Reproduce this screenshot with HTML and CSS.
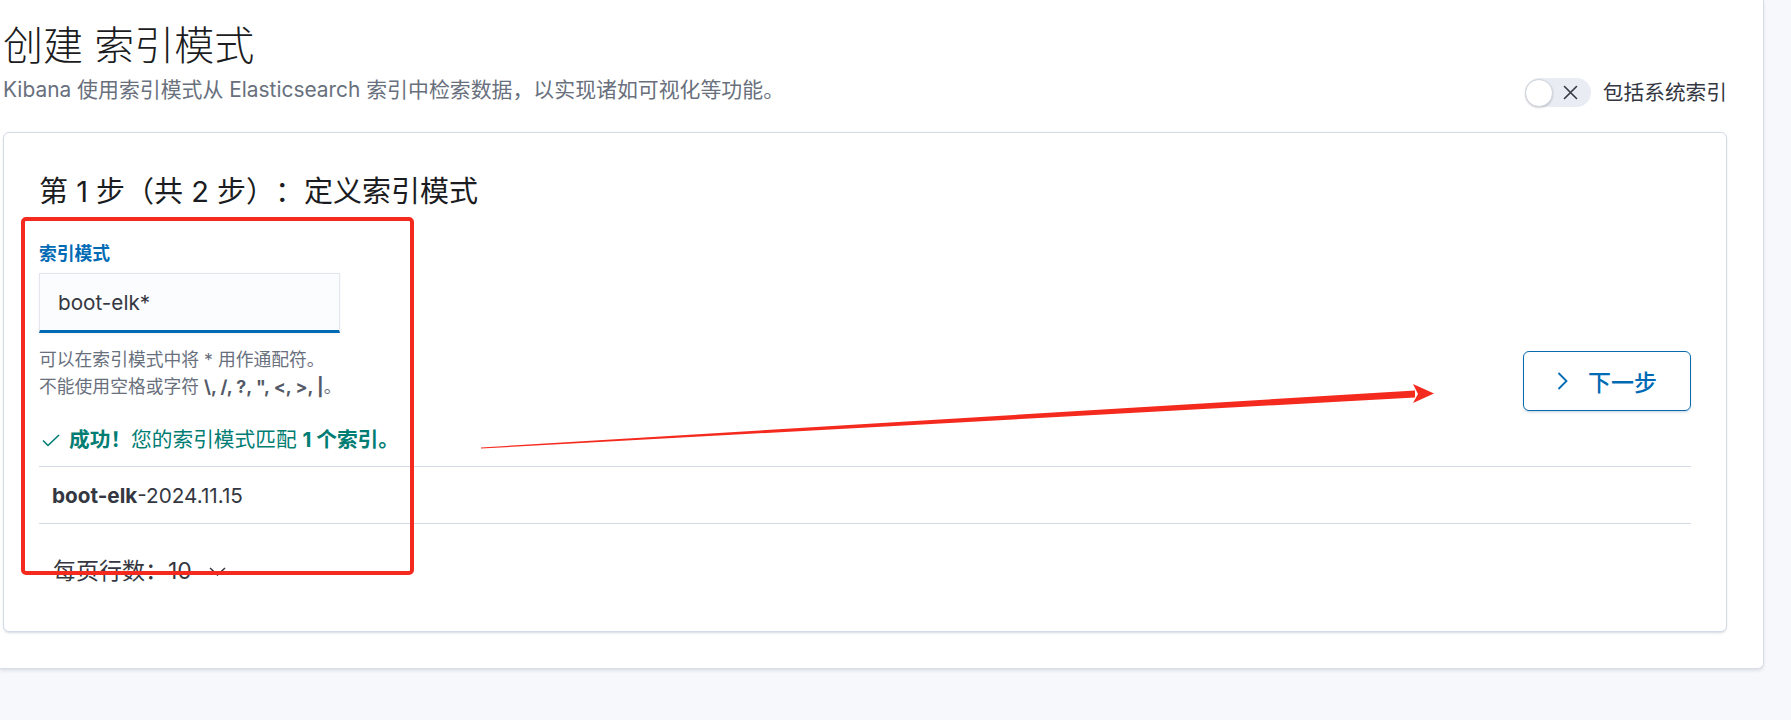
FILE: index.html
```html
<!DOCTYPE html>
<html lang="zh-CN">
<head>
<meta charset="utf-8">
<title>创建 索引模式</title>
<link rel="stylesheet" href="styles.css">
</head>
<body>
<div class="page">
  <div class="header">
    <div class="header-text">
      <h1 class="title">创建 索引模式</h1>
      <p class="subtitle">Kibana 使用索引模式从 Elasticsearch 索引中检索数据，以实现诸如可视化等功能。</p>
    </div>
    <div class="switch-wrap">
      <div class="switch">
        <span class="thumb"></span>
        <svg class="switch-x" width="15" height="15" viewBox="0 0 15 15"><path d="M1.5 1.5 L13.5 13.5 M13.5 1.5 L1.5 13.5" stroke="#343741" stroke-width="1.6" fill="none" stroke-linecap="round"/></svg>
      </div>
      <span class="switch-label">包括系统索引</span>
    </div>
  </div>

  <div class="card">
    <h2 class="step-title">第 1 步（共 2 步）：定义索引模式</h2>
    <div class="form-row">
      <div class="form-col">
        <div class="field-label">索引模式</div>
        <div class="input">boot-elk*</div>
        <div class="help">
          <div>可以在索引模式中将 * 用作通配符。</div>
          <div>不能使用空格或字符 <strong>\, /, ?, ", &lt;, &gt;, |</strong>。</div>
        </div>
        <div class="success">
          <svg class="check" width="18" height="13" viewBox="0 0 18 13"><polyline points="1,6.5 6,11.5 17,1" stroke="#017D73" stroke-width="1.6" fill="none"/></svg>
          <span><b>成功！</b>您的索引模式匹配 <b>1 个索引。</b></span>
        </div>
      </div>
      <button class="next-btn">
        <svg width="11" height="18" viewBox="0 0 11 18"><polyline points="1.5,1 9.5,9 1.5,17" stroke="#006BB4" stroke-width="1.8" fill="none"/></svg>
        <span>下一步</span>
      </button>
    </div>
    <div class="table-row"><b>boot-elk</b>-2024.11.15</div>
    <div class="pagination">
      <span>每页行数：10</span>
      <svg width="17" height="9" viewBox="0 0 17 9"><polyline points="1,1 8.5,8 16,1" stroke="#343741" stroke-width="1.5" fill="none"/></svg>
    </div>
  </div>
</div>

<div class="annot-box"></div>
<svg class="annot-arrow" width="1791" height="720" viewBox="0 0 1791 720">
  <polygon points="481,447.5 1415,390.5 1415,397.5 481,448.5" fill="#F52A1E"/>
  <polygon points="1413,384 1434,393.5 1413,403 1418,394" fill="#F52A1E"/>
</svg>
</body>
</html>
```

FILE: styles.css
```css
html, body {
  margin: 0;
  padding: 0;
}

body {
  width: 1791px;
  height: 720px;
  overflow: hidden;
  position: relative;
  background: #F7F8FC;
  font-family: Inter, "Noto Sans CJK SC", "Noto Sans", sans-serif;
  color: #343741;
  text-spacing-trim: space-all;
}

.page {
  width: 1764px;
  box-sizing: border-box;
  background: #FFFFFF;
  padding: 22px 36px 36px 3px;
  border-right: 1px solid #D8DEE8;
  border-bottom: 1px solid #D8DEE8;
  border-bottom-right-radius: 6px;
  box-shadow: 0 2px 3px rgba(152, 162, 179, 0.25);
}

.header {
  display: flex;
  justify-content: space-between;
  align-items: flex-end;
}

.title {
  margin: 0;
  font-size: 40px;
  line-height: 48px;
  font-weight: 300;
  color: #1A1C21;
}

.subtitle {
  margin: 6px 0 0;
  font-size: 20.9px;
  line-height: 28px;
  color: #69707D;
}

.switch-wrap {
  display: flex;
  align-items: center;
  gap: 12px;
  margin-bottom: -3px;
}

.switch {
  width: 66px;
  height: 29px;
  border-radius: 15px;
  background: #E9EDF3;
  display: flex;
  align-items: center;
}

.thumb {
  width: 28px;
  height: 28px;
  box-sizing: border-box;
  border-radius: 50%;
  background: #FFFFFF;
  border: 1px solid #CFD5DE;
  box-shadow: 0 1px 2px rgba(0, 0, 0, 0.18);
}

.switch-x {
  margin-left: 10px;
}

.switch-label {
  font-size: 20.7px;
  line-height: 29px;
  color: #343741;
}

.card {
  margin-top: 28px;
  background: #FFFFFF;
  border: 1px solid #D3DAE6;
  border-radius: 6px;
  padding: 35px;
  box-shadow: 0 2px 2px -1px rgba(152, 162, 179, 0.3), 0 1px 5px -2px rgba(152, 162, 179, 0.3);
}

.step-title {
  margin: 6px 0 0;
  font-size: 29px;
  line-height: 36px;
  font-weight: 400;
  color: #1A1C21;
}

.form-row {
  display: flex;
  justify-content: space-between;
  align-items: flex-start;
  margin-top: 32px;
}

.field-label {
  font-size: 17.8px;
  line-height: 24px;
  font-weight: 700;
  color: #006BB4;
}

.input {
  margin-top: 7px;
  width: 301px;
  height: 60px;
  box-sizing: border-box;
  border: 1px solid #E3E7ED;
  border-bottom: 3px solid #006BB4;
  background: #FBFCFD;
  padding: 0 18px;
  display: flex;
  align-items: center;
  font-size: 20.7px;
  color: #343741;
  box-shadow: 0 1px 3px rgba(0, 0, 0, 0.05);
}

.help {
  margin-top: 13px;
  font-size: 17.8px;
  line-height: 27px;
  color: #69707D;
}

.help strong {
  color: #535966;
}

.success {
  margin-top: 26px;
  display: flex;
  align-items: center;
  gap: 9px;
  padding-left: 3px;
  font-size: 20.7px;
  line-height: 28px;
  color: #017D73;
}

.next-btn {
  margin-top: 109px;
  width: 168px;
  height: 60px;
  box-sizing: border-box;
  border: 1.5px solid #0A6AB0;
  border-radius: 6px;
  background: #FFFFFF;
  color: #006BB4;
  display: flex;
  align-items: center;
  justify-content: center;
  gap: 20px;
  font-family: Inter, "Noto Sans CJK SC", sans-serif;
  font-size: 23px;
  font-weight: 500;
  padding: 0;
  box-shadow: 0 2px 3px -1px rgba(54, 97, 126, 0.3);
}

.table-row {
  margin-top: 12px;
  height: 56px;
  border-top: 1px solid #D3DAE6;
  border-bottom: 1px solid #D3DAE6;
  display: flex;
  align-items: center;
  padding-left: 13px;
  font-size: 20.7px;
  color: #343741;
}

.table-row b {
  font-weight: 700;
}

.pagination {
  margin: 33px 0 11px;
  padding-left: 14px;
  display: flex;
  align-items: center;
  gap: 17px;
  font-size: 23px;
  line-height: 28px;
  color: #343741;
}

.annot-box {
  position: absolute;
  left: 21px;
  top: 217px;
  width: 393px;
  height: 358px;
  box-sizing: border-box;
  border: 4px solid #F52A1E;
  border-radius: 5px;
}

.annot-arrow {
  position: absolute;
  left: 0;
  top: 0;
  pointer-events: none;
}
```
